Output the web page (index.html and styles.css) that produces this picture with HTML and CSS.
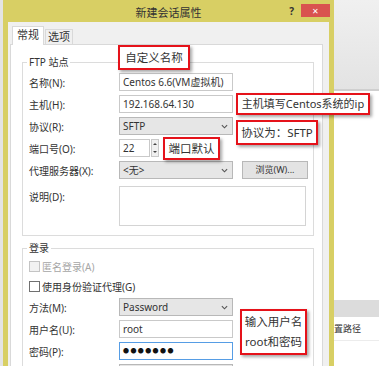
FILE: index.html
```html
<!DOCTYPE html>
<html lang="zh-CN">
<head>
  <meta charset="UTF-8">
  <title>新建会话属性</title>
  <link rel="stylesheet" href="styles.css">
</head>
<body>
  <div class="screen">
    <div class="edge"></div>

    <!-- Session properties dialog -->
    <div class="dialog">
      <div class="titlebar">
        <span></span>
        <span class="title">新建会话属性</span>
        <span class="caption-btns">
          <span class="help">?</span>
          <span class="close">&#x2715;</span>
        </span>
      </div>

      <div class="client">
        <div class="tabs">
          <span class="tab active">常规</span>
          <span class="tab">选项</span>
        </div>

        <div class="panel">
          <!-- FTP site -->
          <fieldset class="group">
            <legend>FTP 站点</legend>
            <div class="row"><span class="lbl">名称(N):</span><span class="field">Centos 6.6(VM虚拟机)</span></div>
            <div class="row"><span class="lbl">主机(H):</span><span class="field">192.168.64.130</span></div>
            <div class="row"><span class="lbl">协议(R):</span><span class="field combo">SFTP<svg class="arrow" viewBox="0 0 8 5"><path d="M1 1 L4 4 L7 1" /></svg></span></div>
            <div class="row">
              <span class="lbl">端口号(O):</span><span class="field port">22</span>
              <span class="spin"><span class="up"></span><span class="down"></span></span>
            </div>
            <div class="row">
              <span class="lbl">代理服务器(X):</span><span class="field combo">&lt;无&gt;<svg class="arrow" viewBox="0 0 8 5"><path d="M1 1 L4 4 L7 1" /></svg></span>
              <span class="btn">浏览(W)...</span>
            </div>
            <div class="row desc"><span class="lbl">说明(D):</span><span class="field memo"></span></div>
          </fieldset>

          <!-- Login -->
          <fieldset class="group login">
            <legend>登录</legend>
            <div class="check-row disabled"><span class="box"></span>匿名登录(A)</div>
            <div class="check-row"><span class="box"></span>使用身份验证代理(G)</div>
            <div class="row"><span class="lbl">方法(M):</span><span class="field combo">Password<svg class="arrow" viewBox="0 0 8 5"><path d="M1 1 L4 4 L7 1" /></svg></span></div>
            <div class="row"><span class="lbl">用户名(U):</span><span class="field">root</span></div>
            <div class="row"><span class="lbl">密码(P):</span><span class="field focus">&#9679;&#9679;&#9679;&#9679;&#9679;&#9679;&#9679;</span></div>
            <div class="row"><span class="lbl"></span><span class="field combo"></span></div>
          </fieldset>
        </div>
      </div>
    </div>

    <!-- Window behind the dialog -->
    <div class="backdrop">
      <div class="toolbar"></div>
      <div class="blank"></div>
      <div class="header-bar"></div>
      <div class="list-row">置路径</div>
    </div>

    <!-- Red callouts -->
    <div class="note n-name">自定义名称</div>
    <div class="note n-host">主机填写Centos系统的ip</div>
    <div class="note n-proto">协议为：SFTP</div>
    <div class="note n-port">端口默认</div>
    <div class="note n-user">输入用户名<br>root和密码</div>
  </div>
</body>
</html>
```

FILE: styles.css
```css
body {
  margin: 0;
  font-family: "Noto Sans", "Noto Sans CJK SC", sans-serif;
  font-size: 11px;
  color: #333;
  background: #fff;
}

.screen {
  position: relative;
  display: flex;
  width: 379px;
  height: 366px;
  overflow: hidden;
}

.edge {
  width: 3px;
  flex: none;
  background: #e4e4e4;
}

/* Dialog frame */
.dialog {
  flex: none;
  width: 331px;
  box-sizing: border-box;
  padding: 0 5px;
  background: #d8cf64;
  display: flex;
  flex-direction: column;
}

.titlebar {
  height: 22px;
  margin: 0 -5px;
  display: grid;
  grid-template-columns: 1fr auto 1fr;
  align-items: start;
}

.title {
  font-size: 11px;
  line-height: 26px;
  color: #333;
}

.caption-btns {
  display: flex;
  justify-content: flex-end;
  align-items: flex-start;
  padding-right: 4px;
}

.help {
  font-size: 10px;
  font-weight: bold;
  line-height: 12px;
  margin-top: 5px;
  margin-right: 7px;
  color: #333;
}

.close {
  width: 29px;
  height: 13px;
  margin-top: 4px;
  background: #d9534f;
  color: #fff;
  font-size: 8px;
  line-height: 13px;
  text-align: center;
}

.client {
  flex: 1;
  background: #f0f0f0;
  padding-top: 5px;
}

/* Tabs */
.tabs {
  display: flex;
  align-items: flex-end;
  height: 17px;
  padding-left: 4px;
}

.tab {
  height: 14px;
  line-height: 14px;
  padding: 0 2px;
  margin-left: 1px;
  border: 1px solid #d9d9d9;
  border-bottom: none;
  background: #f0f0f0;
  font-size: 11px;
}

.tab.active {
  position: relative;
  z-index: 1;
  height: 18px;
  line-height: 16px;
  padding: 0 4px;
  margin: 0 0 -1px;
  background: #fff;
}

.panel {
  margin-left: 2px;
  width: 313px;
  height: 400px;
  box-sizing: border-box;
  border: 1px solid #d9d9d9;
  background: #fff;
  padding: 0 8px 0 11px;
}

/* Group boxes */
.group {
  margin: 10px 0 0;
  padding: 2px 0 9px 4px;
  border: 1px solid #dcdcdc;
  width: 292px;
  box-sizing: border-box;
}

.group.login {
  margin-top: 5px;
  padding-top: 1px;
}

.group legend {
  padding: 0 2px;
  font-size: 10px;
  line-height: 14px;
}

.row {
  display: flex;
  align-items: center;
  height: 22px;
}

.lbl {
  width: 92px;
  flex: none;
  box-sizing: border-box;
  padding-left: 2px;
  font-size: 10px;
}

.field {
  width: 114px;
  height: 18px;
  box-sizing: border-box;
  border: 1px solid #c9c9c9;
  background: #fff;
  padding-left: 3px;
  line-height: 16px;
  font-size: 10px;
  white-space: nowrap;
  overflow: hidden;
}

.combo {
  display: flex;
  justify-content: space-between;
  align-items: center;
  background: #e6e6e6;
  border-color: #b8b8b8;
}

.arrow {
  width: 7px;
  height: 5px;
  margin-right: 4px;
  fill: none;
  stroke: #555;
  stroke-width: 1.3;
}

.port {
  width: 31px;
}

.spin {
  width: 8px;
  height: 18px;
  margin-left: 1px;
  box-sizing: border-box;
  border: 1px solid #c9c9c9;
  background: #f0f0f0;
  display: flex;
  flex-direction: column;
  justify-content: space-around;
  align-items: center;
}

.spin .up,
.spin .down {
  width: 0;
  height: 0;
  border-left: 2px solid transparent;
  border-right: 2px solid transparent;
}

.spin .up {
  border-bottom: 2px solid #444;
}

.spin .down {
  border-top: 2px solid #444;
}

.btn {
  width: 66px;
  height: 18px;
  margin-left: 9px;
  box-sizing: border-box;
  border: 1px solid #b8b8b8;
  background: #e3e3e3;
  font-size: 9px;
  line-height: 16px;
  text-align: center;
}

.row.desc {
  align-items: flex-start;
  height: 40px;
  margin-top: 5px;
}

.row.desc .lbl {
  padding-top: 3px;
}

.memo {
  width: 187px;
  height: 40px;
  border-color: #d4d4d4;
}

.focus {
  border-color: #569de5;
  font-size: 6px;
  letter-spacing: 1.4px;
  color: #111;
}

.check-row {
  display: flex;
  align-items: center;
  height: 20px;
  padding-left: 2px;
  font-size: 10px;
}

.check-row .box {
  width: 9px;
  height: 9px;
  margin-right: 2px;
  border: 1px solid #707070;
  background: #fff;
}

.check-row.disabled {
  color: #a6a6a6;
}

.check-row.disabled .box {
  border-color: #c4c4c4;
  background: #f2f2f2;
}

/* Background window on the right */
.backdrop {
  flex: 1;
  display: flex;
  flex-direction: column;
  background: #fff;
}

.toolbar {
  height: 89px;
  background: linear-gradient(#f0f0f0, #e3e3e3);
  border-bottom: 2px solid #cfcfcf;
}

.blank {
  height: 209px;
}

.header-bar {
  height: 17px;
  background: #dcdcdc;
}

.list-row {
  height: 23px;
  line-height: 23px;
  font-size: 9px;
  border-bottom: 1px solid #ececec;
}

/* Red callouts */
.note {
  position: absolute;
  box-sizing: border-box;
  display: flex;
  align-items: center;
  justify-content: center;
  text-align: center;
  background: #fff;
  border: 2px solid #e5121a;
  box-shadow: 2px 2px 3px rgba(0, 0, 0, 0.35);
  font-size: 11.5px;
  line-height: 20px;
  color: #333;
  white-space: nowrap;
}

.n-name { left: 118px; top: 45px; width: 72px; height: 25px; }
.n-host { left: 236px; top: 93px; width: 134px; height: 22px; font-size: 11px; }
.n-proto { left: 236px; top: 120px; width: 82px; height: 25px; }
.n-port { left: 163px; top: 137px; width: 57px; height: 23px; }
.n-user { left: 240px; top: 309px; width: 67px; height: 46px; }
```
